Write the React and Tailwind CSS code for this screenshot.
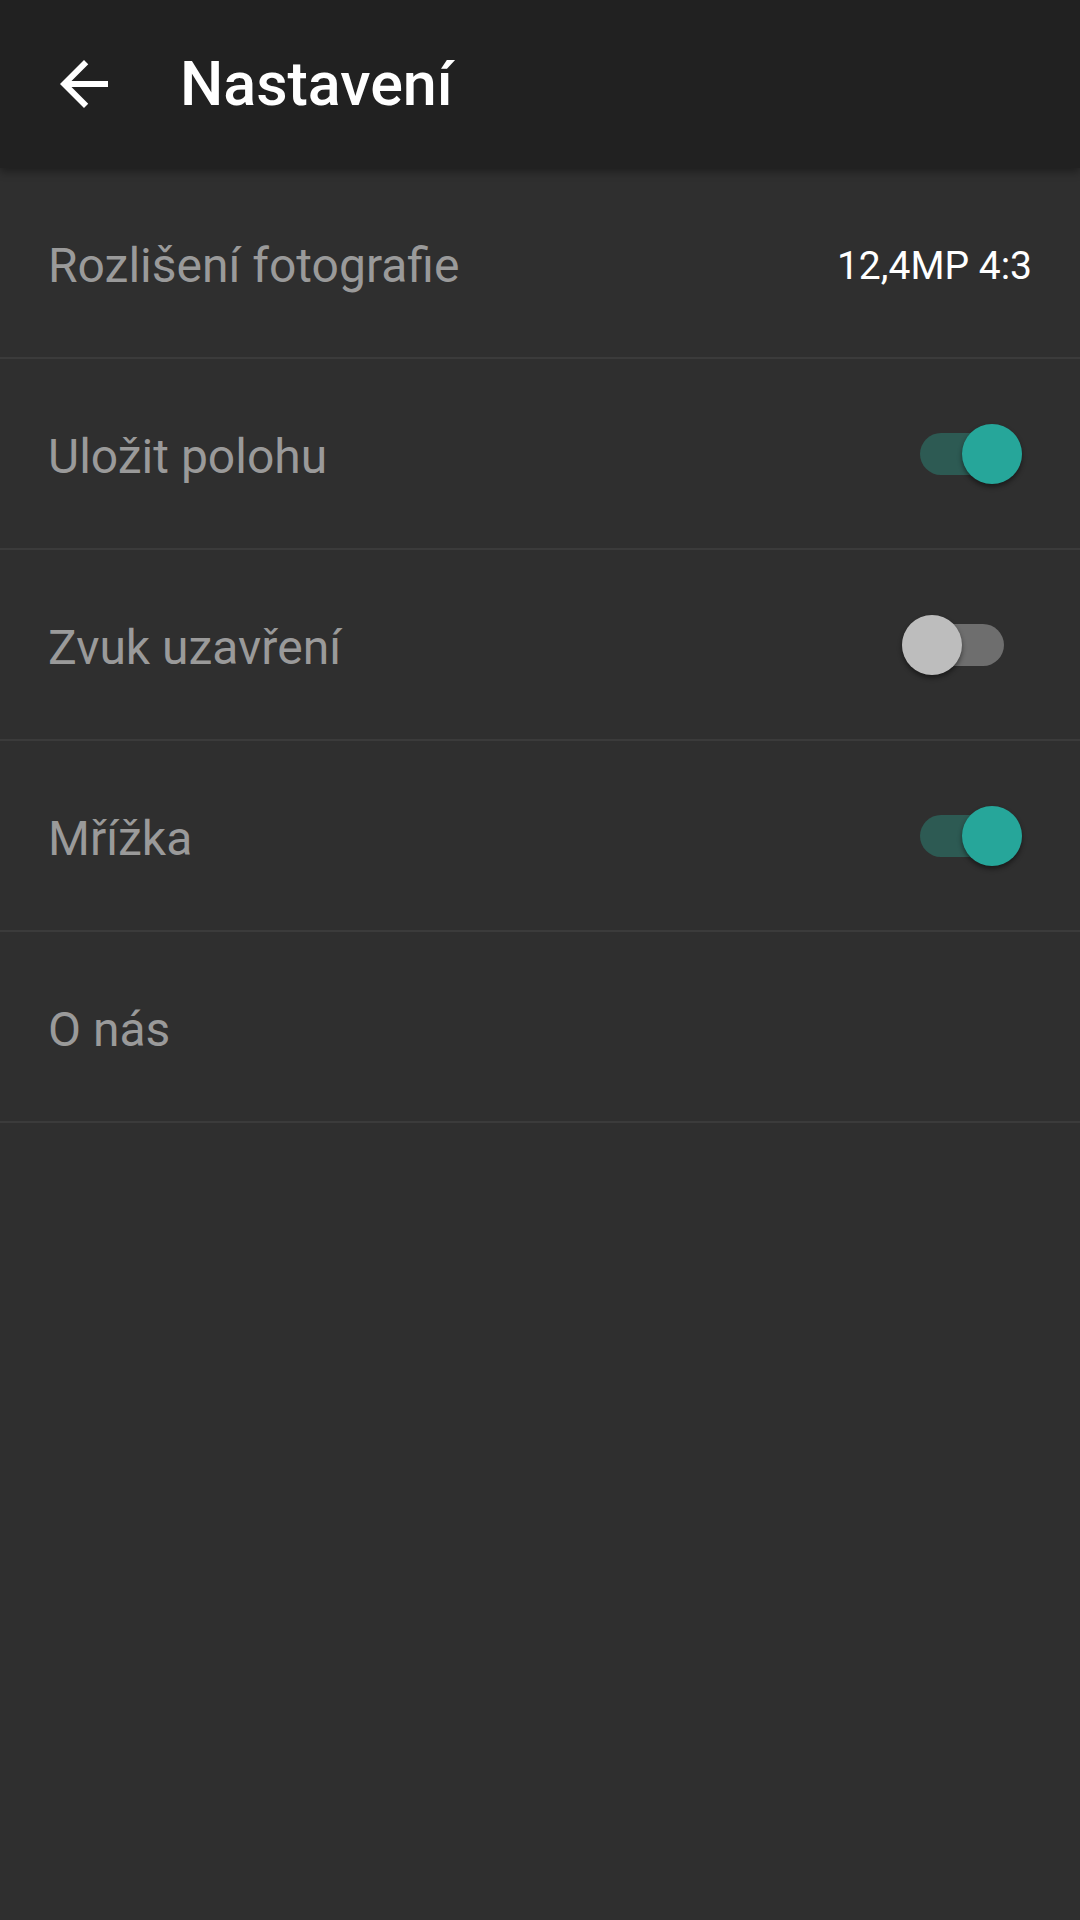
const rows = [
  { label: "Rozlišení fotografie", value: "12,4MP 4:3" },
  { label: "Uložit polohu", toggle: true, on: true },
  { label: "Zvuk uzavření", toggle: true, on: false },
  { label: "Mřížka", toggle: true, on: true },
  { label: "O nás" },
];

function Toggle({ on }) {
  return (
    <div className={on ? "relative mr-[58px] h-[42px] w-[102px]" : "relative mr-[76px] h-[42px] w-[102px]"}>
      <div className={on ? "h-full w-full rounded-full bg-[#2d5a53]" : "h-full w-full rounded-full bg-[#6e6e6e]"} />
      <div
        className={
          on
            ? "absolute right-0 top-[-9px] h-[60px] w-[60px] rounded-full bg-[#26a69a] shadow-[0_3px_5px_rgba(0,0,0,0.45)]"
            : "absolute left-0 top-[-9px] h-[60px] w-[60px] rounded-full bg-[#bdbdbd] shadow-[0_3px_5px_rgba(0,0,0,0.45)]"
        }
      />
    </div>
  );
}

export default function App() {
  return (
    <div className="min-h-[1920px] w-[1080px] bg-[#2f2f2f] font-['Roboto',sans-serif]">
      {/* Toolbar */}
      <header className="relative z-10 flex h-[168px] items-center bg-[#212121] shadow-[0_4px_8px_rgba(0,0,0,0.35)]">
        <svg className="ml-[48px] h-[72px] w-[72px]" viewBox="0 0 24 24" fill="#ffffff">
          <path d="M20 11H7.83l5.59-5.59L12 4l-8 8 8 8 1.41-1.41L7.83 13H20v-2z" />
        </svg>
        <h1 className="ml-[60px] pt-[2px] text-[61px] font-medium text-white">Nastavení</h1>
      </header>

      {/* Settings list */}
      <div>
        {rows.map((r) => (
          <div
            key={r.label}
            className="flex h-[191px] items-center justify-between border-b-2 border-[#3b3b3b]"
          >
            <span className="pl-[48px] pt-[7px] text-[48px] text-[#9a9a9a]">{r.label}</span>
            {r.value && <span className="pr-[48px] pt-[7px] text-[39px] text-white">{r.value}</span>}
            {r.toggle && <Toggle on={r.on} />}
          </div>
        ))}
      </div>
    </div>
  );
}
